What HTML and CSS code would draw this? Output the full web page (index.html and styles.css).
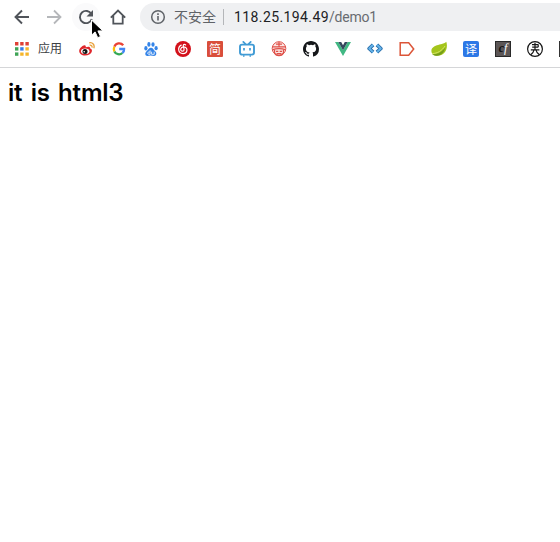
FILE: index.html
```html
<!DOCTYPE html>
<html lang="zh-CN">
<head>
<meta charset="utf-8">
<title>118.25.194.49/demo1</title>
<link rel="stylesheet" href="styles.css">
</head>
<body>
<header class="chrome">
  <div class="toolbar">
    <span class="tool"><svg viewBox="0 0 16 16"><path d="M15 8H2M8 1.5 1.5 8 8 14.5" fill="none" stroke="#50545a" stroke-width="1.9"/></svg></span>
    <span class="tool"><svg viewBox="0 0 16 16"><path d="M1 8h13M8 1.5 14.5 8 8 14.5" fill="none" stroke="#b5b7ba" stroke-width="1.8"/></svg></span>
    <span class="tool hover"><svg viewBox="0 0 16 16"><path d="M13.4 5.1A6.1 6.1 0 1 0 13.8 10" fill="none" stroke="#50545a" stroke-width="1.9"/><path d="M15 1v6.5H8.5Z" fill="#50545a"/></svg>
      <svg class="cursor" viewBox="0 0 14 20"><path d="M1.5 1v15.2l3.6-3.3 2.6 5.8 2.8-1.2-2.6-5.6h5Z" fill="#000" stroke="#fff" stroke-width="1"/></svg>
    </span>
    <span class="tool"><svg viewBox="0 0 16 16"><path d="M.8 8.6 8 1.5l7.2 7.1M3.3 6.8v7.8h9.4V6.8" fill="none" stroke="#50545a" stroke-width="1.8"/></svg></span>
    <div class="omnibox">
      <svg class="info" viewBox="0 0 16 16"><circle cx="8" cy="8" r="6.3" fill="none" stroke="#5f6368" stroke-width="1.5"/><path d="M8 7v4.6M8 4.3v1.6" stroke="#5f6368" stroke-width="1.6"/></svg>
      <span class="security">不安全</span>
      <span class="divider"></span>
      <span class="url">118.25.194.49<span class="path">/demo1</span></span>
    </div>
  </div>
  <nav class="bookmarks">
    <span class="apps">
      <svg viewBox="0 0 14 14"><path d="M0 0h3.4v3.4H0zM5.2 0h3.4v3.4H5.2zM10.4 0h3.4v3.4h-3.4z" fill="#df4035"/><path d="M0 5.2h3.4v3.4H0z" fill="#3fa456"/><path d="M5.2 5.2h3.4v3.4H5.2z" fill="#367ce8"/><path d="M10.4 5.2h3.4v3.4h-3.4zM5.2 10.4h3.4v3.4H5.2zM10.4 10.4h3.4v3.4h-3.4z" fill="#f5b52a"/><path d="M0 10.4h3.4v3.4H0z" fill="#3fa456"/></svg>
      <span>应用</span>
    </span>
    <div class="icons">
      <svg viewBox="0 0 16 16"><path d="M.2 10C.2 7 4.4 3.4 6.3 4.4c.8.4.5 1.5.4 1.9 2.5-1 4.7-.8 4.5 1.3 3.5 1 1.9 6.9-5.2 6.9C2.7 14.5.2 12.7.2 10Z" fill="#df262b"/><ellipse cx="6.2" cy="10.3" rx="4.2" ry="2.8" fill="#fff"/><circle cx="6" cy="10.4" r="2.5" fill="#141414"/><circle cx="5.2" cy="10.8" r=".8" fill="#fff"/><path d="M10.2 1.9C13.6 1 16 4 14.8 7.2M10.6 4.2c1.7-.3 2.8.8 2.4 2.4" fill="none" stroke="#e9a13a" stroke-width="1.3"/></svg>
      <svg viewBox="0 0 16 16"><g fill="none" stroke-width="2.3"><path d="M12.2 4.3A5.1 5.1 0 0 0 3.4 5.7" stroke="#e94235"/><path d="M3.4 5.7a5.1 5.1 0 0 0 0 4.7" stroke="#fbbc05"/><path d="M3.4 10.4a5.1 5.1 0 0 0 8 1.6" stroke="#34a853"/><path d="M11.4 12A5 5 0 0 0 13.1 8H8.2" stroke="#4285f4"/></g></svg>
      <svg viewBox="0 0 16 16" fill="#3484e8"><ellipse cx="2.9" cy="7.2" rx="1.6" ry="2.2"/><ellipse cx="5.9" cy="3.4" rx="1.6" ry="2.3"/><ellipse cx="10" cy="3.5" rx="1.6" ry="2.3"/><ellipse cx="13.1" cy="7.2" rx="1.6" ry="2.1"/><path d="M8 6.8c2 0 2.6 2.2 4.2 3.5 2.1 1.8 1 4.7-1.1 4.7-1.3 0-2.4-.4-3.6-.4-1 0-1.900.5-3.200.4-2.100-.1-2.800-2.800-1-4.500C5 9 6 6.800 8 6.800Z"/><path d="M7.100 9.300v4H5.800c-1.500 0-1.500-2.300 0-2.300h1.300M8.600 10.700v2.600h2.600v-2.600" fill="none" stroke="#fff" stroke-width=".8"/></svg>
      <svg viewBox="0 0 16 16"><circle cx="8" cy="8" r="8" fill="#d3111b"/><path d="M6.200 4.100C2.400 5.900 2.800 12.600 8 12.600c4.700 0 5.500-6.300.8-6.700-3.600-.2-4.100 4.300-1.300 4.300 2.200 0 1.700-2.300.9-4.700-.6-1.900.8-2.700 2.300-1.600" fill="none" stroke="#fff" stroke-width="1.200" stroke-linecap="round"/></svg>
      <span class="tile jian">简</span>
      <svg viewBox="0 0 16 16"><path d="m4.300.9 2.500 2.500M11.700.9 9.200 3.400" stroke="#409bd5" stroke-width="1.700" stroke-linecap="round"/><rect x="1" y="3.600" width="14" height="10" rx="2" fill="#fff" stroke="#409bd5" stroke-width="1.900"/><path d="M5 7v2.500M11 7v2.500M4 15h1.500M10.500 15H12" stroke="#409bd5" stroke-width="1.700"/></svg>
      <svg viewBox="0 0 16 16" fill="none" stroke="#df5049"><circle cx="8" cy="7.500" r="6.800" fill="#fbe6e3" stroke-width="1"/><path d="M1.500 5.800h13M5 3.200h6M8 1v4.500M2 8.600c3-1.300 9-1.300 12 0M3.600 9v3c1.300 3.500 7.500 3.500 8.800 0V9M5 10.300h2.300M8.700 10.300H11M5.500 12.700h5" stroke-width="1.200"/></svg>
      <svg viewBox="0 0 16 16"><path fill="#15171a" d="M8 0C3.580 0 0 3.580 0 8c0 3.540 2.290 6.530 5.470 7.590.4.070.55-.17.55-.38 0-.19-.01-.82-.01-1.490-2.010.37-2.530-.49-2.690-.94-.09-.23-.48-.94-.82-1.130-.28-.15-.68-.52-.01-.53.63-.01 1.080.58 1.230.82.72 1.210 1.870.87 2.330.66.07-.52.28-.87.51-1.070-1.780-.2-3.640-.89-3.640-3.950 0-.87.31-1.590.82-2.150-.08-.2-.36-1.020.08-2.120 0 0 .67-.21 2.200.82a7.600 7.600 0 0 1 4 0c1.530-1.040 2.200-.82 2.200-.82.44 1.100.16 1.920.08 2.120.51.56.82 1.270.82 2.150 0 3.070-1.870 3.750-3.650 3.950.29.25.54.73.54 1.480 0 1.070-.01 1.930-.01 2.200 0 .21.15.46.55.38A8.010 8.010 0 0 0 16 8c0-4.420-3.580-8-8-8Z"/></svg>
      <svg viewBox="0 0 16 16"><path d="M0 1h3.300L8 9.300 12.700 1H16L8 15Z" fill="#41b883"/><path d="M3.300 1h2.900L8 4.200 9.800 1h2.900L8 9.300Z" fill="#35495e"/></svg>
      <svg viewBox="0 0 16 16" fill="none" stroke-linejoin="round"><path d="M6.100 3.800 2.200 7.500l3.900 3.700M9.900 3.800l3.900 3.700-3.900 3.700" stroke="#286da9" stroke-width="3.700"/><path d="M6.100 3.800 2.200 7.500l3.900 3.700M9.900 3.800l3.900 3.700-3.900 3.700" stroke="#64b2e8" stroke-width="1.900"/></svg>
      <svg viewBox="0 0 16 16"><path d="M1.200 1.700h8.500l5 6.300-5 6.300H1.200Z" fill="#fff" stroke="#dc5538" stroke-width="1.500"/></svg>
      <svg viewBox="0 0 16 16"><path d="M15.300.8C13 4 1 3.200.4 9.700c-.2 2.600 1.700 4.900 5 5.100C13.800 15.300 17.500 7.900 15.300.8Z" fill="#a4c51c"/><path d="M1 13.200c5.500.5 10.500-2 13.300-7.100C13.600 12 8 17.500 1 13.200Z" fill="#739c1b"/><path d="M1.200 12.600C6.500 12.400 11 9.700 14 5" fill="none" stroke="#d7e56e" stroke-width=".9"/></svg>
      <span class="tile yi">译</span>
      <span class="tile cf"><i>c</i><i class="f">f</i></span>
      <svg viewBox="0 0 16 16" fill="none" stroke="#161616"><circle cx="8" cy="8" r="7.400" stroke-width="1.200"/><path d="M5 3.700h6.500M8 1.800v7M5.200 6.200h5.900M3.800 8.900h8.600M7 9c-.4 2-1.400 3.300-3 4.500M9 9c.3 2 1.500 3.300 3.200 4.500M11.200 3.700v2.500" stroke-width="1.200"/></svg>
      <span class="tile next"></span>
    </div>
  </nav>
</header>
<main><h1>it is html3</h1></main>
</body>
</html>
```
FILE: styles.css
```css
* { box-sizing: border-box; }
body {
  margin: 0;
  height: 542px;
  overflow: hidden;
  background: #fff;
  font-family: Roboto, "Noto Sans CJK SC", sans-serif;
}
svg { display: block; flex: none; }
.chrome {
  height: 68px;
  overflow: hidden;
  border-bottom: 1px solid #d5d6d8;
}
.toolbar {
  display: flex;
  align-items: center;
  gap: 4px;
  height: 34px;
  padding-left: 8px;
}
.tool {
  position: relative;
  display: grid;
  place-items: center;
  flex: none;
  width: 28px;
  height: 28px;
  border-radius: 50%;
}
.tool > svg { width: 16px; height: 16px; }
.hover { background: #fafafb; z-index: 1; }
.tool > .cursor {
  position: absolute;
  left: 18px;
  top: 16px;
  width: 14px;
  height: 20px;
}
.omnibox {
  display: flex;
  align-items: center;
  flex: none;
  width: 440px;
  height: 28px;
  margin-left: 4px;
  padding-left: 10px;
  border-radius: 14px;
  background: #eff0f2;
  font-size: 14px;
  line-height: 28px;
  white-space: nowrap;
}
.info { width: 16px; height: 16px; }
.security { width: 43px; margin-left: 8px; color: #5f6368; }
.divider { width: 1px; height: 16px; margin: 0 10px 0 6px; background: #b4b6b9; }
.url { color: #202124; letter-spacing: 0.4px; }
.path { color: #686b70; letter-spacing: -0.2px; }
.bookmarks {
  display: flex;
  align-items: center;
  height: 30px;
  padding-left: 15px;
}
.apps {
  display: flex;
  align-items: center;
  flex: none;
  gap: 9px;
  width: 64px;
  color: #3c4043;
  font-size: 12px;
  line-height: 16px;
  white-space: nowrap;
}
.apps svg { width: 14px; height: 14px; }
.icons { display: flex; flex: none; gap: 16px; }
.icons > * { flex: none; width: 16px; height: 16px; }
.tile {
  color: #fff;
  font: 12px/15px "Noto Sans CJK SC", sans-serif;
  text-align: center;
}
.jian { border-radius: 1px; background: #d94e3b; }
.yi { border-radius: 2px; background: #2d78e6; }
.cf { border: 1px solid #292929; background: #5c5656; font: 12px/13px "Liberation Serif", serif; }
.cf i { color: #111; font-weight: bold; }
.cf .f { color: #fff; font-weight: normal; }
.next { background: #333; }
h1 {
  margin: 9px 8px;
  color: #000;
  font: 600 24px/32px Inter, sans-serif;
  letter-spacing: -0.2px;
  word-spacing: 2.5px;
  white-space: nowrap;
}
```
